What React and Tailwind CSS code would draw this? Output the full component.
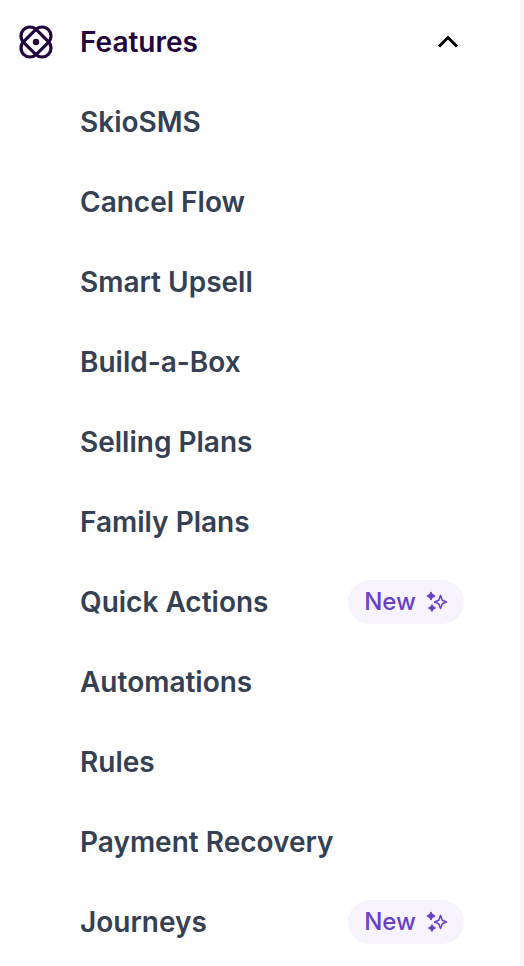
const items = [
  ["SkioSMS", false],
  ["Cancel Flow", false],
  ["Smart Upsell", false],
  ["Build-a-Box", false],
  ["Selling Plans", false],
  ["Family Plans", false],
  ["Quick Actions", true],
  ["Automations", false],
  ["Rules", false],
  ["Payment Recovery", false],
  ["Journeys", true],
];

function Atom() {
  return (
    <svg width="36" height="36" viewBox="0 0 36 36" fill="none" stroke="#22053f" strokeWidth="3.2">
      <rect x="0.5" y="9" width="35" height="18" rx="9" transform="rotate(45 18 18)" />
      <rect x="0.5" y="9" width="35" height="18" rx="9" transform="rotate(-45 18 18)" />
      <circle cx="18" cy="18" r="3.2" fill="#22053f" stroke="none" />
    </svg>
  );
}

function Sparkles() {
  return (
    <svg width="24" height="24" viewBox="0 0 24 24" fill="none" stroke="#6941c6" strokeWidth="1.6" strokeLinejoin="round">
      <path d="M16.5 5.5 L18.3 10.2 L22.5 12 L18.3 13.8 L16.5 18.5 L14.7 13.8 L10.5 12 L14.7 10.2 Z" />
      <path d="M7 2.5 L8.2 4.8 L10.5 6 L8.2 7.2 L7 9.5 L5.8 7.2 L3.5 6 L5.8 4.8 Z" fill="#6941c6" />
      <path d="M8 15 L9 17 L11 18 L9 19 L8 21 L7 19 L5 18 L7 17 Z" fill="#6941c6" />
    </svg>
  );
}

export default function App() {
  return (
    <div className="h-[966px] w-[524px] overflow-hidden bg-[#f7f7f7] font-['Inter',sans-serif]">
      <div className="h-full w-[520px] bg-white pt-[2px]">
        <div className="flex h-20 items-center pr-[60px]">
          <div className="flex w-[80px] justify-center pr-[8px]"><Atom /></div>
          <span className="text-[28px] font-semibold text-[#22053f]">Features</span>
          <svg className="ml-auto" width="24" height="24" viewBox="0 0 24 24" fill="none" stroke="#000" strokeWidth="3">
            <path d="M3 17 L12 8 L21 17" transform="translate(0 -0.5)" />
          </svg>
        </div>
        {items.map(([label, isNew]) => (
          <div key={label} className="flex h-20 items-center pl-[80px] pr-[56px]">
            <span className="text-[28px] font-semibold text-[#344054]">{label}</span>
            {isNew && (
              <span className="ml-auto flex h-[44px] w-[116px] items-center justify-center gap-[8px] rounded-full bg-[#f6f3ff] text-[24px] font-medium text-[#6941c6]">
                New
                <Sparkles />
              </span>
            )}
          </div>
        ))}
      </div>
    </div>
  );
}
